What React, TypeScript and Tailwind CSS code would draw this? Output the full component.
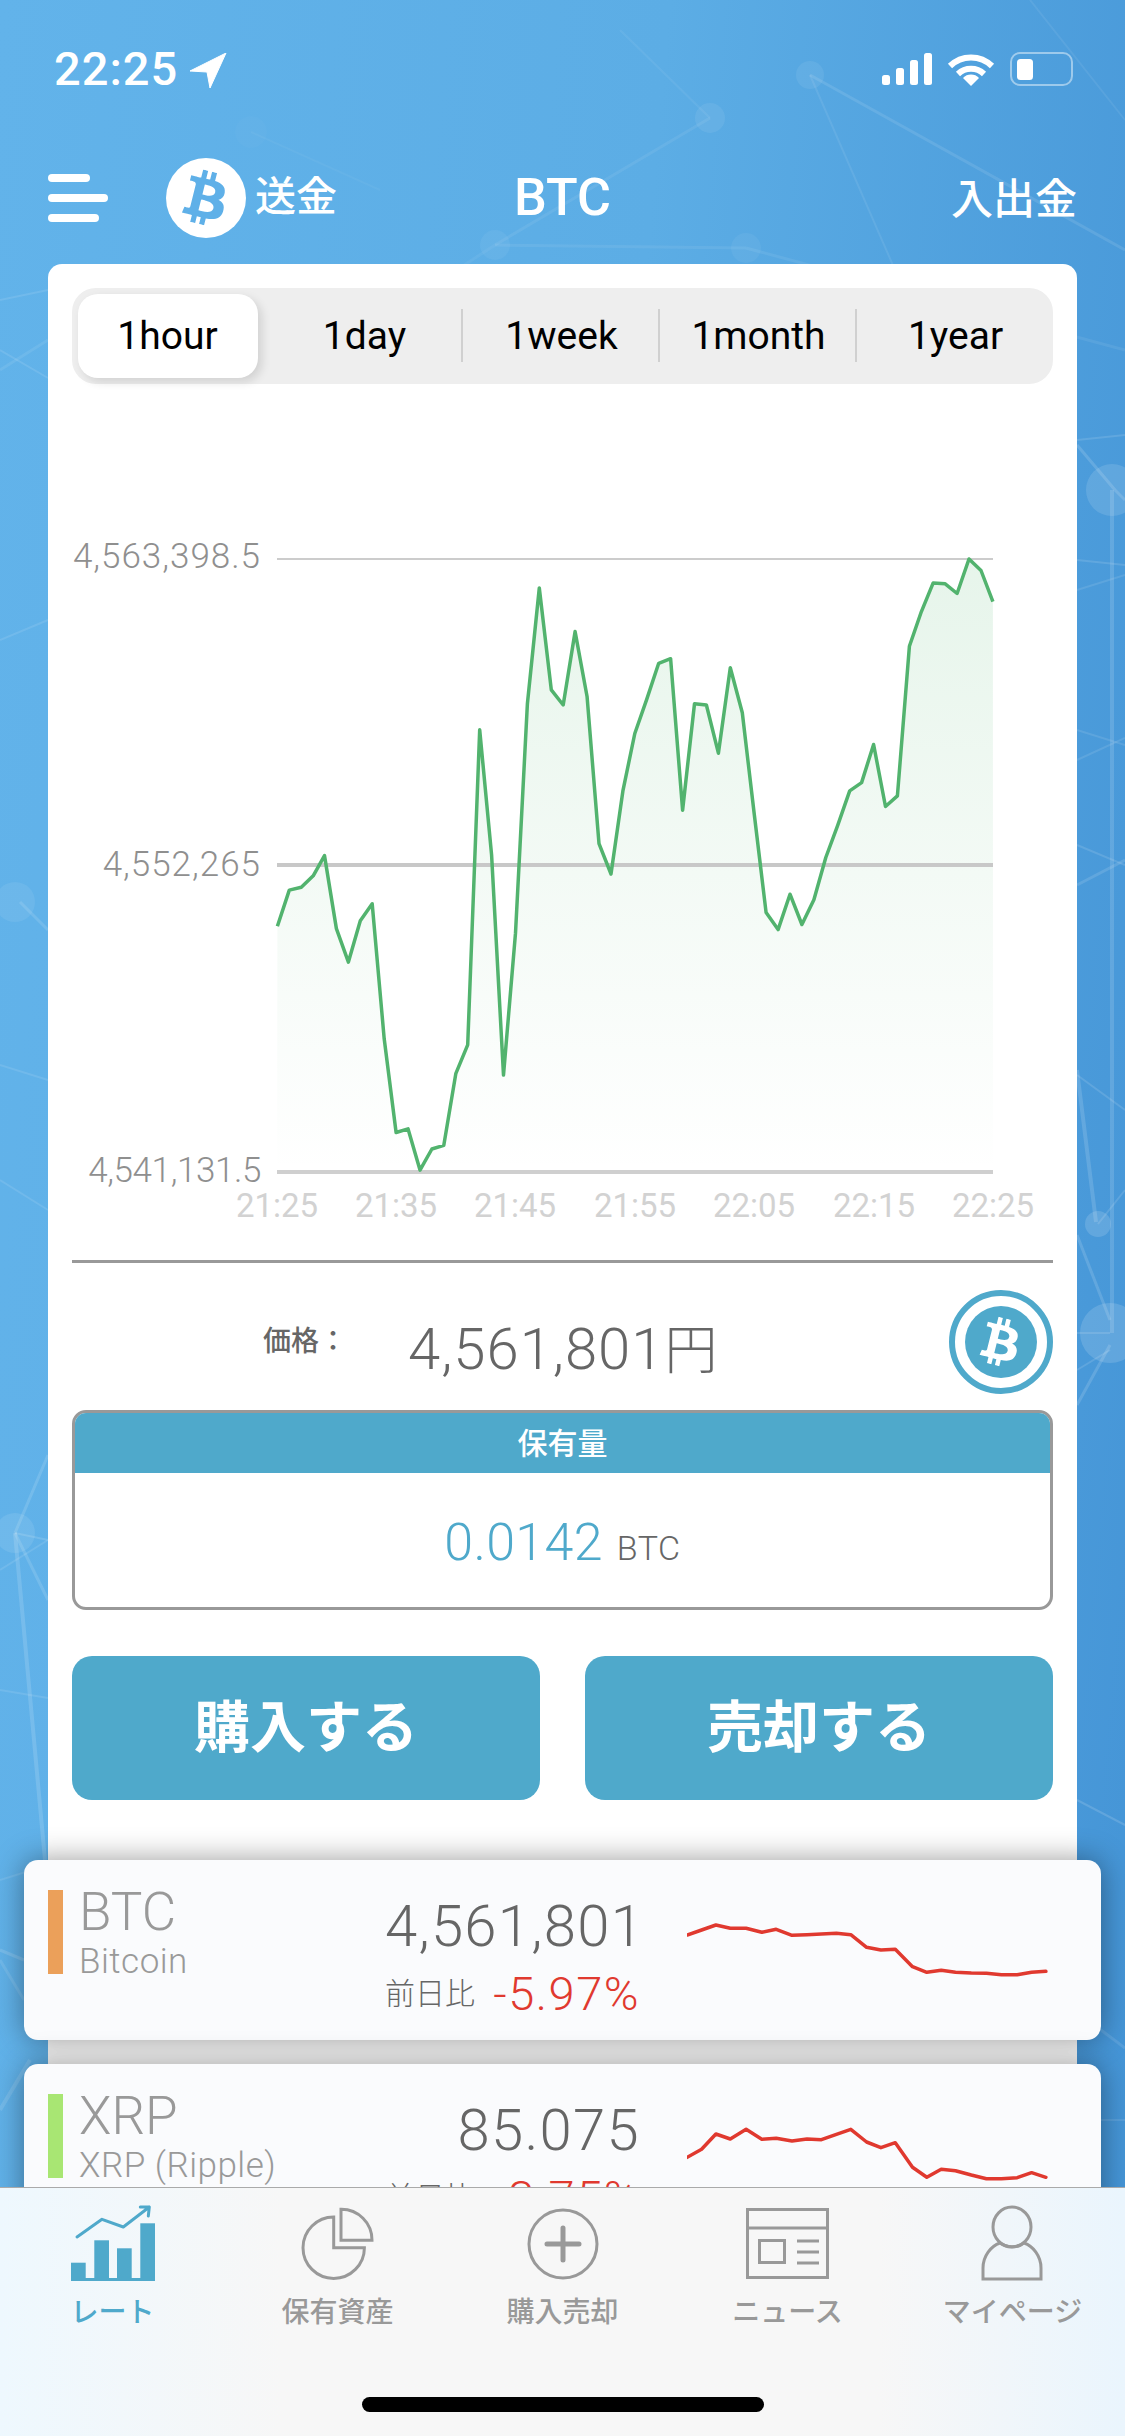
import React from "react";
import { FaBtc } from "react-icons/fa";

const FONT = "font-['Roboto','Noto_Sans_CJK_JP',sans-serif]";

const chartZ: [number, number][] = [
  [358,885],[376,806],[394,800],[412,775],[429,731],[447,890],[465,963],[483,873],[501,836],[519,1130],[537,1334],[555,1326],[573,1416],[591,1370],[609,1362],[627,1206],[645,1143],[663,457],[681,730],[699,1209],[717,900],[735,400],[753,148],[771,370],[789,403],[807,243],[825,385],[843,705],[861,771],[879,590],[897,465],[915,390],[933,312],[951,302],[969,632],[987,400],[1005,403],[1023,508],[1041,322],[1059,420],[1077,640],[1095,855],[1113,892],[1131,815],[1149,881],[1167,827],[1185,735],[1203,665],[1221,590],[1239,572],[1257,489],[1275,624],[1293,601],[1311,275],[1329,200],[1347,137],[1365,139],[1383,160],[1401,85],[1419,110],[1437,178],
];
const chartPts = chartZ.map(([x, y]) => [40 + x / 1.508, 520 + y / 2.178] as [number, number]);
const linePts = chartPts.map((p) => `${p[0].toFixed(1)},${p[1].toFixed(1)}`).join(" ");
const areaPts = `277,1172 ${linePts} 993,1172`;

const spark1: [number, number][] = [[958,345],[978,330],[998,315],[1018,325],[1040,325],[1062,337],[1082,328],[1104,346],[1125,344],[1145,342],[1166,340],[1186,344],[1208,382],[1228,390],[1248,388],[1272,440],[1292,457],[1312,451],[1332,457],[1354,459],[1375,460],[1396,464],[1418,464],[1438,457],[1458,454]];
const spark2: [number, number][] = [[958,1012],[978,988],[998,942],[1018,957],[1040,928],[1062,958],[1082,955],[1104,963],[1125,957],[1145,959],[1166,943],[1186,928],[1208,966],[1228,983],[1248,968],[1272,1042],[1292,1072],[1312,1048],[1332,1052],[1354,1065],[1375,1076],[1396,1076],[1418,1073],[1438,1058],[1458,1072]];

function Spark({ pts, rowTop }: { pts: [number, number][]; rowTop: number }) {
  const s = pts.map(([x, y]) => `${(x / 1.394 - 687).toFixed(1)},${(y / 3 + 1820 - rowTop - 50).toFixed(1)}`).join(" ");
  return (
    <svg width="362" height="90" viewBox="0 0 362 90" className="mt-[50px] ml-[47px] shrink-0">
      <polyline points={s} fill="none" stroke="#e0392f" strokeWidth="3.5" strokeLinejoin="round" strokeLinecap="round" />
    </svg>
  );
}

function Background() {
  const lines: [number, number, number, number, number, number][] = [
    [810,75,1125,250,3,.1],[810,75,895,270,2,.08],[710,118,620,30,2,.06],[710,118,495,245,3,.07],[495,245,746,248,3,.07],[746,248,1125,350,3,.07],[495,245,380,320,3,.05],[251,132,380,190,2,.04],[1030,0,1125,120,2,.07],
    [0,300,48,290,2,.1],[0,370,48,340,3,.08],[0,350,48,378,2,.1],[0,640,48,620,2,.1],[20,902,48,930,3,.12],[0,1065,48,1080,2,.1],[0,1180,48,1210,2,.1],[15,1533,48,1455,3,.13],[15,1533,48,1540,2,.13],[15,1533,48,1600,3,.13],[0,1570,48,1540,2,.1],[0,1690,48,1698,2,.1],[15,1533,45,1860,4,.14],[0,1880,48,1865,2,.1],[0,1950,24,1960,3,.14],[0,2110,30,2060,4,.12],[0,1960,24,2000,3,.1],
    [1077,440,1125,435,2,.12],[1077,445,1115,490,3,.14],[1115,490,1125,500,3,.14],[1077,560,1125,565,2,.12],[1077,590,1125,575,2,.1],[1077,730,1125,745,2,.1],[1077,760,1125,738,2,.1],[1077,845,1125,865,2,.12],[1077,885,1125,860,3,.12],[1112,490,1112,1333,4,.14],[1077,1075,1125,1110,2,.12],[1077,1070,1096,1222,4,.14],[1098,1224,1125,1190,2,.12],[1077,1235,1110,1320,3,.14],[1077,1333,1110,1333,2,.12],[1077,1370,1110,1350,2,.12],[1077,1405,1110,1345,3,.14],[1077,1800,1125,1825,2,.14],[1101,2030,1125,2048,3,.1],[1101,2120,1125,2120,2,.1],
  ];
  const nodes: [number, number, number, number][] = [
    [810,75,14,.07],[710,118,15,.07],[495,245,15,.05],[746,248,15,.05],[251,132,16,.02],[15,902,20,.07],[15,1533,20,.09],[1112,490,26,.12],[1110,1333,30,.14],[1098,1224,13,.14],
  ];
  return (
    <svg className="absolute inset-0" width="1125" height="2436" viewBox="0 0 1125 2436">
      {lines.map(([a, b, c, d, w, o], i) => (
        <line key={i} x1={a} y1={b} x2={c} y2={d} stroke="#ffffff" strokeWidth={w} strokeOpacity={o} />
      ))}
      {nodes.map(([x, y, r, o], i) => (
        <circle key={i} cx={x} cy={y} r={r} fill="#ffffff" fillOpacity={o} />
      ))}
    </svg>
  );
}

function StatusBar() {
  return (
    <div className="h-[138px] flex justify-between pl-[54px] pr-[50px] pt-[44px]">
      <div className="flex items-start">
        <span className="text-white text-[47px] tracking-[1px] leading-[50px] font-medium">22:25</span>
        <svg width="37" height="35" viewBox="0 0 37 35" className="ml-[12px] mt-[9px]">
          <path d="M0 18 L36 0 L20 35 L17 19 Z" fill="#ffffff" stroke="#ffffff" strokeWidth="1" strokeLinejoin="round" />
        </svg>
      </div>
      <svg width="194" height="36" viewBox="881 52 194 36" className="mt-[8px]">
        <g fill="#ffffff">
          <rect x="882" y="75" width="8" height="10" rx="2.5" />
          <rect x="896" y="68" width="8" height="17" rx="2.5" />
          <rect x="910" y="60" width="8" height="25" rx="2.5" />
          <rect x="924" y="53" width="8" height="32" rx="2.5" />
        </g>
        <g fill="none" stroke="#ffffff" strokeWidth="6">
          <path d="M950 66 A30 30 0 0 1 992 66" />
          <path d="M958 74 A19 19 0 0 1 984 74" />
        </g>
        <path d="M971 86 L963 78 A11 11 0 0 1 979 78 Z" fill="#ffffff" />
        <rect x="1011" y="53" width="61" height="32" rx="9" fill="none" stroke="#ffffff" strokeOpacity=".45" strokeWidth="2" />
        <rect x="1017" y="59" width="16" height="21" rx="3.5" fill="#ffffff" />
        <path d="M1075 63 a6 6 0 0 1 0 12 Z" fill="#ffffff" fillOpacity=".45" />
      </svg>
    </div>
  );
}

function Header() {
  return (
    <div className="h-[120px] mb-[6px] mx-[48px] grid grid-cols-3 items-center text-white">
      <div className="flex items-center">
        <div className="flex flex-col gap-[12px] w-[60px]">
          <div className="h-[8px] w-[42px] rounded-full bg-white" />
          <div className="h-[8px] w-[60px] rounded-full bg-white" />
          <div className="h-[8px] w-[51px] rounded-full bg-white" />
        </div>
        <div className="ml-[58px] w-[80px] h-[80px] rounded-full bg-white flex items-center justify-center">
          <FaBtc className="text-[#5fb0e8] text-[54px] rotate-[14deg]" />
        </div>
        <span className="ml-[9px] text-[41px] font-medium whitespace-nowrap">送金</span>
      </div>
      <div className="text-center text-[52px] font-medium leading-none">BTC</div>
      <div className="text-right text-[42px] font-medium pt-[2px]">入出金</div>
    </div>
  );
}

function Tabs() {
  const tabs = ["1hour", "1day", "1week", "1month", "1year"];
  return (
    <div className="h-[96px] rounded-[24px] bg-[#eeeeee] flex items-center">
      <div className="flex -ml-[3px]">
        {tabs.map((t, i) => (
          <div key={t} className="w-[197px] h-[84px] flex items-center justify-center relative text-black text-[39px]">
            {i === 0 ? (
              <div className="w-[180px] h-[84px] rounded-[20px] bg-white shadow-[4px_4px_10px_rgba(0,0,0,0.12)] flex items-center justify-center">{t}</div>
            ) : (
              t
            )}
            {i >= 1 && i <= 3 && <div className="absolute right-0 top-[15px] h-[53px] w-[2px] bg-[#d0d0d0]" />}
          </div>
        ))}
      </div>
    </div>
  );
}

function Chart() {
  const xl = ["21:25", "21:35", "21:45", "21:55", "22:05", "22:15", "22:25"];
  const xs = [277, 396, 515, 635, 754, 874, 993];
  return (
    <svg width="981" height="876" viewBox="72 384 981 876" className="block">
      <defs>
        <linearGradient id="fillG" x1="0" y1="0" x2="0" y2="1">
          <stop offset="0" stopColor="#4fb56d" stopOpacity=".14" />
          <stop offset="1" stopColor="#4fb56d" stopOpacity="0" />
        </linearGradient>
      </defs>
      <polygon points={areaPts} fill="url(#fillG)" />
      <rect x="277" y="558" width="716" height="2" fill="#cccccc" />
      <rect x="277" y="863" width="716" height="4" fill="#c8c8c8" />
      <rect x="277" y="1170" width="716" height="4" fill="#cfcfcf" />
      <polyline points={linePts} fill="none" stroke="#52b36e" strokeWidth="3.5" strokeLinejoin="round" />
      <g fill="#8f8f8f" fontSize="35" fontWeight="300" letterSpacing="1" textAnchor="end" fontFamily="Roboto, sans-serif">
        <text x="261" y="568">4,563,398.5</text>
        <text x="261" y="876">4,552,265</text>
        <text x="261" y="1182" letterSpacing="-0.4">4,541,131.5</text>
      </g>
      <g fill="#d2d2d2" fontSize="33" textAnchor="middle" fontFamily="Roboto, sans-serif">
        {xl.map((t, i) => (
          <text key={t} x={xs[i]} y={1217}>{t}</text>
        ))}
      </g>
    </svg>
  );
}

function Coin() {
  return (
    <div className="w-[104px] h-[104px] rounded-full border-[6px] border-[#4fa9cb] bg-white flex items-center justify-center">
      <div className="w-[72px] h-[72px] rounded-full bg-[#4fa9cb] flex items-center justify-center">
        <FaBtc className="text-white text-[48px] rotate-[14deg]" />
      </div>
    </div>
  );
}

function Row({ color, sym, name, price, pct, pts, rowTop }: { color: string; sym: string; name: string; price: string; pct: string; pts: [number, number][]; rowTop: number }) {
  return (
    <div className="-mx-[48px] h-[180px] rounded-[14px] bg-[#fafbfd] shadow-[0_0_30px_rgba(0,0,0,0.4)] flex relative">
      <div className="ml-[24px] mt-[30px] w-[15px] h-[84px] shrink-0" style={{ backgroundColor: color }} />
      <div className="ml-[16px] w-[306px] shrink-0 pt-[24px] text-[#999999]">
        <div className="text-[53px] leading-[56px] font-light">{sym}</div>
        <div className="text-[35px] tracking-[0.5px] leading-[40px] font-light mt-[2px]">{name}</div>
      </div>
      <div className="w-[255px] shrink-0 pt-[34px] text-right">
        <div className="text-[58px] tracking-[1.3px] leading-[64px] font-light text-[#666666] whitespace-nowrap">{price}</div>
        <div className="mt-[12px] flex items-center justify-between">
          <span className="text-[30px] leading-[40px] font-light text-[#666666]">前日比</span>
          <span className="text-[47px] tracking-[1.5px] leading-[48px] font-light text-[#e0392f]">{pct}</span>
        </div>
      </div>
      <Spark pts={pts} rowTop={rowTop} />
    </div>
  );
}

function Tab({ label, active, children }: { label: string; active?: boolean; children: React.ReactNode }) {
  return (
    <div className="flex flex-col items-center">
      <svg width="100" height="80" viewBox="0 0 100 80" className="mt-[16px]">
        {children}
      </svg>
      <span className={`mt-[11px] text-[28px] leading-[36px] font-medium whitespace-nowrap ${active ? "text-[#4fa9cb]" : "text-[#999999]"}`}>{label}</span>
    </div>
  );
}

function TabBar() {
  return (
    <div className="absolute left-0 right-0 bottom-0 h-[249px] border-t border-[#aaaaaa] bg-[linear-gradient(90deg,#eef8fe_0%,#f7f7f7_25%,#f7f7f7_78%,#eaf5fd_100%)]">
      <div className="grid grid-cols-5">
        <Tab label="レート" active>
          <g fill="#4fa9cb">
            <rect x="8" y="58.7" width="14.7" height="18.3" />
            <rect x="31.3" y="36.3" width="14.7" height="40.7" />
            <rect x="54" y="44.3" width="14.7" height="32.7" />
            <rect x="77.3" y="19.3" width="14.7" height="57.7" />
            <rect x="8" y="74" width="84" height="3" />
          </g>
          <path d="M14 33 L39 15.3 L60.3 23 L86.3 3 M77.3 3 H86.3 L85.3 12" fill="none" stroke="#4fa9cb" strokeWidth="3" strokeLinecap="round" strokeLinejoin="round" />
        </Tab>
        <Tab label="保有資産">
          <g fill="none" stroke="#999999" strokeWidth="3">
            <path d="M45.7 13 A30.7 30.7 0 1 0 76.4 43.7 H45.7 Z" />
            <path d="M53 5.3 A30.7 30.7 0 0 1 84 36.3 H53 Z" />
          </g>
        </Tab>
        <Tab label="購入売却">
          <circle cx="50" cy="40" r="34" fill="none" stroke="#999999" strokeWidth="3" />
          <path d="M34 40 H66 M50 24 V56" stroke="#999999" strokeWidth="5" strokeLinecap="round" />
        </Tab>
        <Tab label="ニュース">
          <g fill="none" stroke="#999999" strokeWidth="3">
            <rect x="9.5" y="5.5" width="80" height="68" />
            <path d="M9.5 24 H89.5" />
            <rect x="21.5" y="36.5" width="25" height="22" />
            <path d="M59 37 H81 M59 48 H81 M59 59 H81" />
          </g>
        </Tab>
        <Tab label="マイページ">
          <g fill="none" stroke="#999999" strokeWidth="3">
            <ellipse cx="49" cy="23" rx="19" ry="20" />
            <path d="M20 75 V64 C20 52 28 42 37 39 C44 44 54 44 61 39 C70 42 78 52 78 64 V75 Z" />
          </g>
        </Tab>
      </div>
      <div className="absolute left-[362px] bottom-[24px] w-[402px] h-[15px] rounded-full bg-black" />
    </div>
  );
}

export default function App() {
  return (
    <div className={`relative w-[1125px] h-[2436px] overflow-hidden bg-[linear-gradient(95deg,#62b3ea_0%,#5cade5_50%,#4494d6_100%)] ${FONT}`}>
      <Background />
      <div className="relative">
        <StatusBar />
        <Header />
        <div className="mx-[48px] rounded-t-[14px] bg-white px-[24px] pt-[24px] pb-[60px]">
          <Tabs />
          <Chart />
          <div className="h-[3px] bg-[#999999]" />
          <div className="mt-[27px] h-[104px] flex items-center">
            <span className="ml-[191px] w-[145px] shrink-0 text-[28px] font-medium text-[#666666] whitespace-nowrap">価格：</span>
            <span className="pt-[16px] text-[58px] tracking-[1px] leading-[64px] font-light text-[#666666] whitespace-nowrap">4,561,801<span className="text-[53px] tracking-normal">円</span></span>
            <div className="ml-auto">
              <Coin />
            </div>
          </div>
          <div className="mt-[16px] h-[200px] rounded-[14px] border-[3px] border-[#999999] overflow-hidden flex flex-col">
            <div className="h-[60px] bg-[#4fa9cb] text-white text-[30px] font-medium flex items-center justify-center">保有量</div>
            <div className="flex-1 flex items-baseline justify-center pt-[40px]">
              <span className="text-[52px] tracking-[0.3px] leading-[60px] text-[#4fa9cb] font-light">0.0142</span>
              <span className="ml-[14px] text-[34px] tracking-[0.5px] text-[#666666] font-light">BTC</span>
            </div>
          </div>
          <div className="mt-[46px] grid grid-cols-2 gap-[45px]">
            <div className="h-[144px] rounded-[20px] bg-[#4fa9cb] text-white text-[56px] font-semibold flex items-center justify-center">購入する</div>
            <div className="h-[144px] rounded-[20px] bg-[#4fa9cb] text-white text-[56px] font-semibold flex items-center justify-center">売却する</div>
          </div>
          <div className="mt-[60px] flex flex-col gap-[24px]">
            <Row color="#eba05a" sym="BTC" name="Bitcoin" price="4,561,801" pct="-5.97%" pts={spark1} rowTop={1860} />
            <Row color="#a8e673" sym="XRP" name="XRP (Ripple)" price="85.075" pct="-3.75%" pts={spark2} rowTop={2064} />
          </div>
        </div>
      </div>
      <TabBar />
    </div>
  );
}
